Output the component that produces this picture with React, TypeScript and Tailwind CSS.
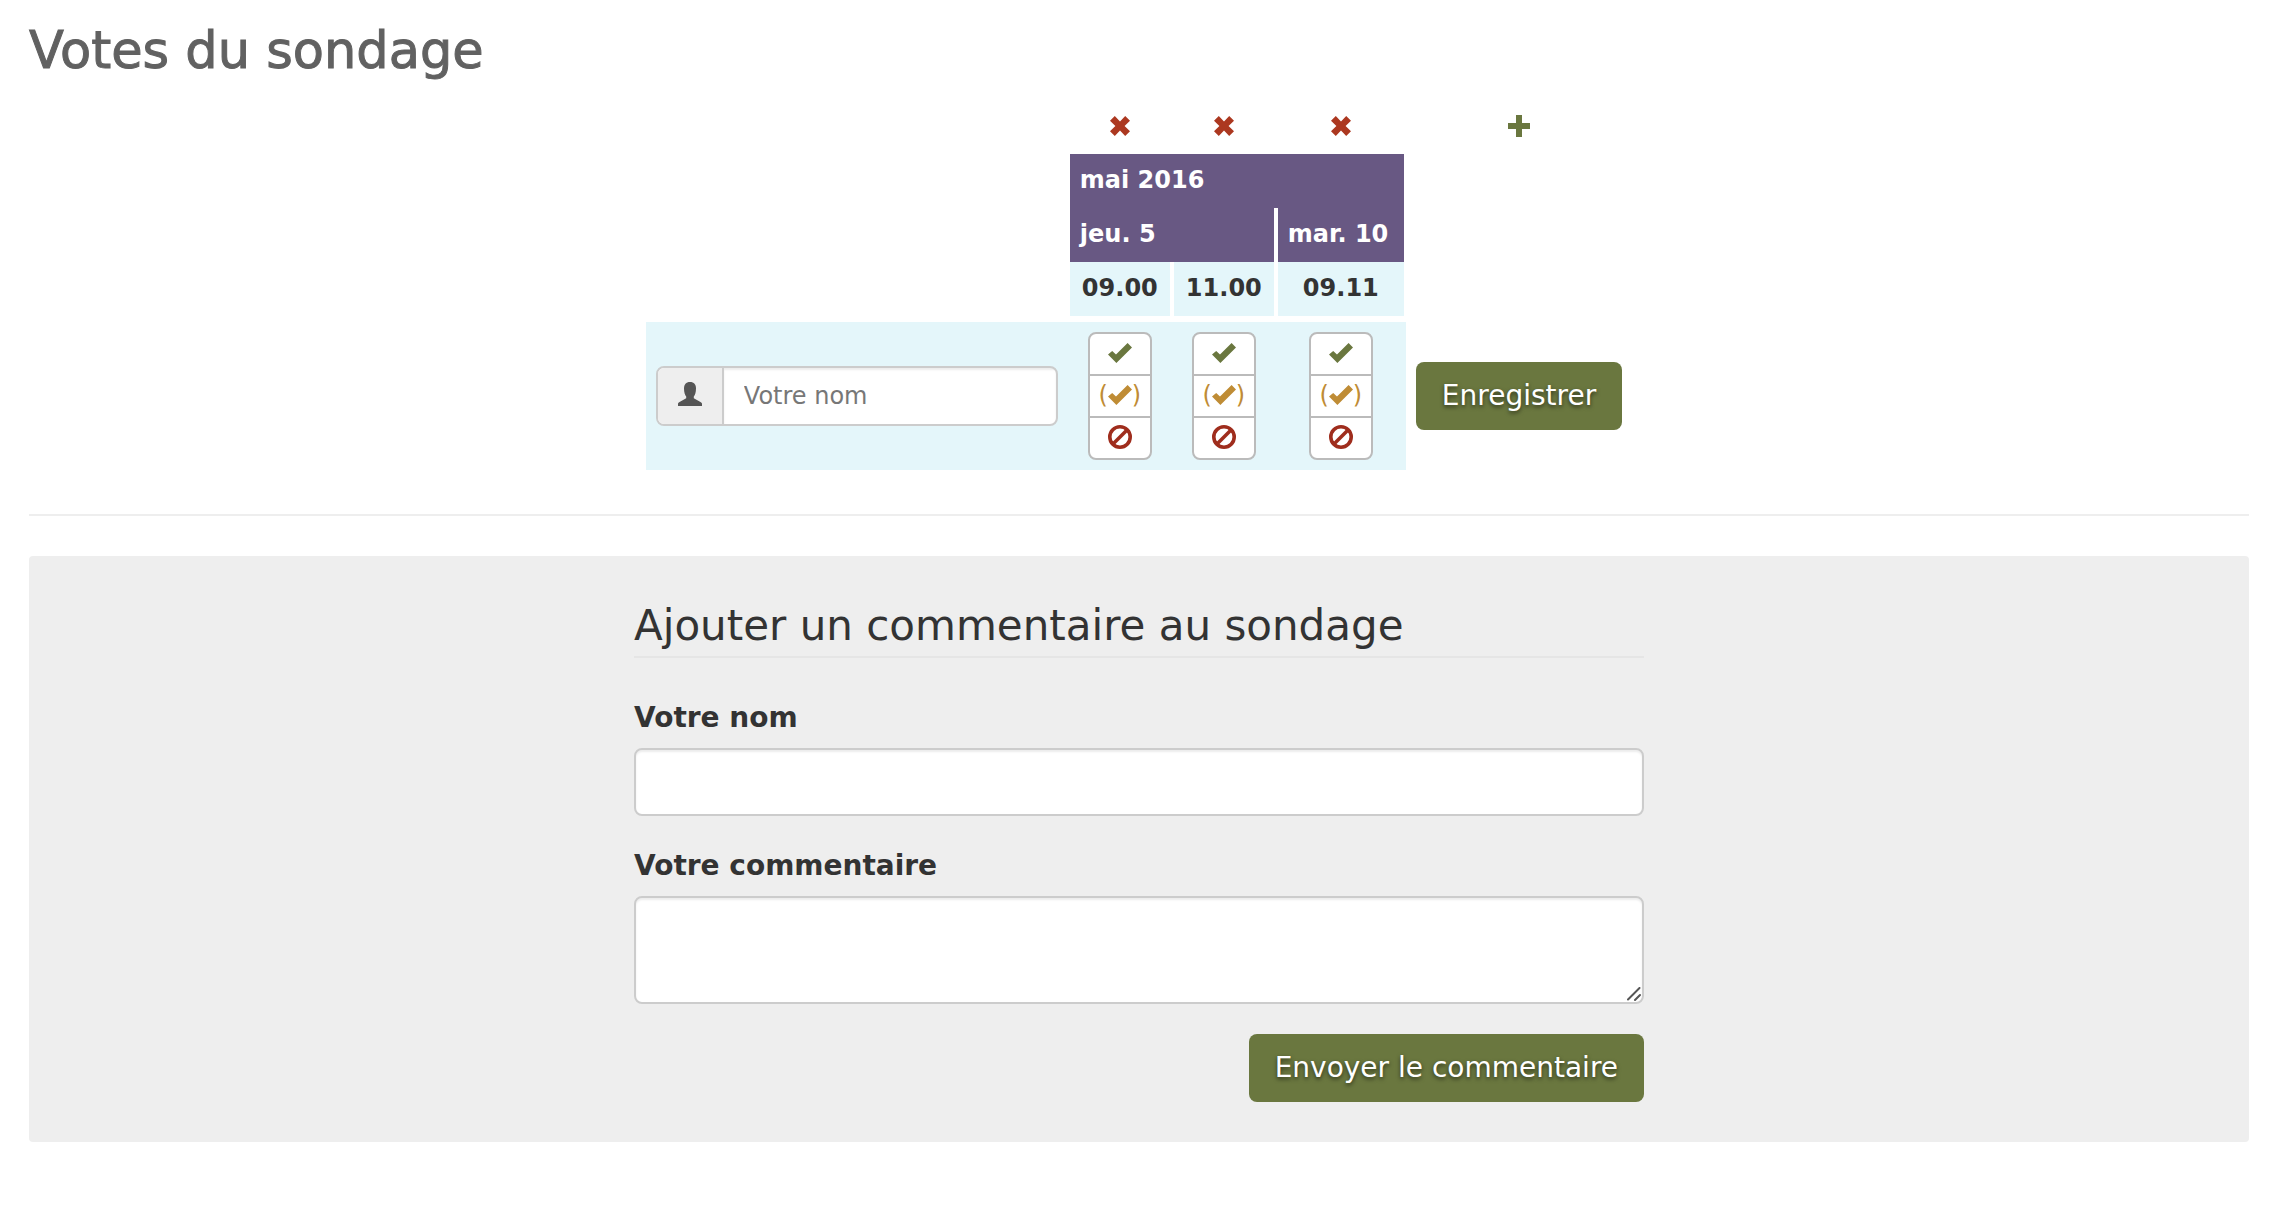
import { useState } from 'react';

type IconProps = { className?: string };

const CheckIcon = ({ className }: IconProps) => (
  <svg viewBox="0 0 24 20" aria-hidden="true" className={`h-5 w-6 ${className ?? ''}`} fill="currentColor">
    <path d="M19.6 0 24 4.4 8.4 20 0 11.6 4.2 8 8 11.6Z" />
  </svg>
);

const BanIcon = ({ className }: IconProps) => (
  <svg viewBox="0 0 24 24" aria-hidden="true" className={`size-6 ${className ?? ''}`} fill="none" stroke="currentColor" strokeWidth="3.6">
    <circle cx="12" cy="12" r="10.2" />
    <path d="M5 19 19 5" />
  </svg>
);

const RemoveIcon = () => (
  <svg viewBox="0 0 20 20" aria-hidden="true" className="size-5" fill="currentColor">
    <path d="M4.800 0 10 5.400 15.200 0 20 4.800 14.600 10 20 15.200 15.200 20 10 14.600 4.800 20 0 15.200 5.400 10 0 4.800Z" />
  </svg>
);

const PlusIcon = () => (
  <svg viewBox="0 0 22 22" aria-hidden="true" className="size-[22px]" fill="currentColor">
    <path d="M8 0h6v8h8v6h-8v8H8v-8H0V8h8Z" />
  </svg>
);

const UserIcon = () => (
  <svg viewBox="0 0 24 24" aria-hidden="true" className="size-6" fill="currentColor">
    <path d="M12 0c4 0 6 2.600 6 6.500 0 4-1 6.500-2.200 8v1.800L22 19.800c1.300.7 2 1.200 2 2.200v2H0v-2c0-1 .7-1.500 2-2.200l6.200-3.500v-1.800C7 13 6 10.500 6 6.500 6 2.600 8 0 12 0Z" />
  </svg>
);

const slots = [
  { id: 'jeu-5-0900', label: '09.00' },
  { id: 'jeu-5-1100', label: '11.00' },
  { id: 'mar-10-0911', label: '09.11' },
];

const choices = [
  { value: 'yes', title: 'Oui', icon: <CheckIcon className="text-[#6a773f]" /> },
  {
    value: 'ifneedbe',
    title: 'Si nécessaire',
    icon: (
      <span className="flex items-center text-[#bf8c35]">
        (<CheckIcon />)
      </span>
    ),
  },
  { value: 'no', title: 'Non', icon: <BanIcon className="text-[#9f2d1d]" /> },
];

const field =
  'block w-full rounded-lg border-2 border-[#ccc] bg-white px-6 text-[28px] shadow-[inset_0_2px_2px_rgba(0,0,0,0.075)]';
const button =
  'h-[68px] cursor-pointer rounded-lg bg-[#6a773f] px-[26px] text-[28px] text-white [text-shadow:0_2px_4px_rgba(0,0,0,0.6)]';
const label = 'block text-[28px] leading-10 font-bold';
const dateCell = 'h-[54px] border-x-2 border-white bg-[#685883] px-2.5 pb-0.5 text-left font-bold text-white';

const App = () => {
  const [votes, setVotes] = useState<Record<string, string>>({});

  return (
    <div className="pt-5 pr-[23px] pl-[29px] font-['DejaVu_Sans',sans-serif] text-2xl text-[#333]">
      <h1 className="text-[51px] leading-[62px] text-[#616161] [-webkit-text-stroke:1px]">Votes du sondage</h1>

      <form className="mt-4" onSubmit={(e) => e.preventDefault()}>
        <table className="mx-auto border-separate border-spacing-0">
          <thead>
            <tr>
              <td />
              {slots.map((slot) => (
                <td key={slot.id} className="h-14">
                  <button type="button" title="Supprimer la colonne" className="mx-auto block cursor-pointer text-[#ac3820]">
                    <RemoveIcon />
                  </button>
                </td>
              ))}
              <td>
                <button type="button" title="Ajouter une colonne" className="mx-auto block cursor-pointer text-[#6a773f]">
                  <PlusIcon />
                </button>
              </td>
            </tr>
            <tr>
              <td />
              <th colSpan={3} className={dateCell}>
                mai 2016
              </th>
            </tr>
            <tr>
              <td />
              <th colSpan={2} className={dateCell}>
                jeu. 5
              </th>
              <th className={`${dateCell} min-w-[130px]`}>mar. 10</th>
            </tr>
            <tr>
              <td />
              {slots.map((slot) => (
                <th key={slot.id} className="h-15 border-x-2 border-b-6 border-white bg-[#e4f6fa] px-2.5 pb-0.5 font-bold">
                  {slot.label}
                </th>
              ))}
            </tr>
          </thead>
          <tbody>
            <tr>
              <td className="bg-[#e4f6fa] px-2.5">
                <div className="flex h-15 w-[402px] overflow-hidden rounded-lg border-2 border-[#ccc] bg-white">
                  <label htmlFor="name" className="flex w-16 items-center justify-center bg-[#eee] pb-1 text-[#555]">
                    <UserIcon />
                  </label>
                  <input
                    id="name"
                    type="text"
                    aria-label="Votre nom"
                    placeholder="Votre nom"
                    className="min-w-0 flex-1 border-l-2 border-[#ccc] px-5 shadow-[inset_0_2px_2px_rgba(0,0,0,0.075)] placeholder:text-[#777]"
                  />
                </div>
              </td>
              {slots.map((slot) => (
                <td key={slot.id} className="bg-[#e4f6fa] px-5 py-2.5">
                  <ul className="mx-auto w-16 divide-y-2 divide-[#bbb] overflow-hidden rounded-lg border-2 border-[#bbb] bg-white">
                    {choices.map((choice) => (
                      <li key={choice.value}>
                        <label
                          title={`${choice.title} ${slot.label}`}
                          className="relative flex h-10 cursor-pointer items-center justify-center pb-0.5 has-checked:bg-gray-200"
                        >
                          <input
                            type="radio"
                            name={slot.id}
                            value={choice.value}
                            aria-label={`${choice.title} ${slot.label}`}
                            checked={votes[slot.id] === choice.value}
                            onChange={() => setVotes({ ...votes, [slot.id]: choice.value })}
                            className="sr-only"
                          />
                          {choice.icon}
                        </label>
                      </li>
                    ))}
                  </ul>
                </td>
              ))}
              <td className="px-2.5">
                <button type="submit" className={button}>
                  Enregistrer
                </button>
              </td>
            </tr>
          </tbody>
        </table>
      </form>

      <hr className="mt-11 border-t-2 border-[#eee]" />

      <section className="mt-10 rounded-sm bg-[#eee] py-10">
        <form className="mx-auto max-w-[1010px]" onSubmit={(e) => e.preventDefault()}>
          <h2 className="border-b-2 border-[#e5e5e5] text-[42px] leading-[60px]">Ajouter un commentaire au sondage</h2>
          <label htmlFor="comment-name" className={`${label} mt-10`}>
            Votre nom
          </label>
          <input id="comment-name" type="text" className={`${field} mt-2.5 h-[68px]`} />
          <label htmlFor="comment" className={`${label} mt-[30px]`}>
            Votre commentaire
          </label>
          <div className="relative mt-2.5">
            <textarea id="comment" rows={2} className={`${field} h-[108px] resize-none`} />
            <svg
              viewBox="0 0 14 14"
              aria-hidden="true"
              className="pointer-events-none absolute right-[3px] bottom-[3px] size-3.5"
              fill="none"
              stroke="#555"
              strokeWidth="2"
              strokeLinecap="round"
            >
              <path d="M1 12.500 12.500 1M8 13 13 8" />
            </svg>
          </div>
          <div className="mt-[30px] flex justify-end">
            <button type="submit" className={button}>
              Envoyer le commentaire
            </button>
          </div>
        </form>
      </section>
    </div>
  );
};

export default App;
